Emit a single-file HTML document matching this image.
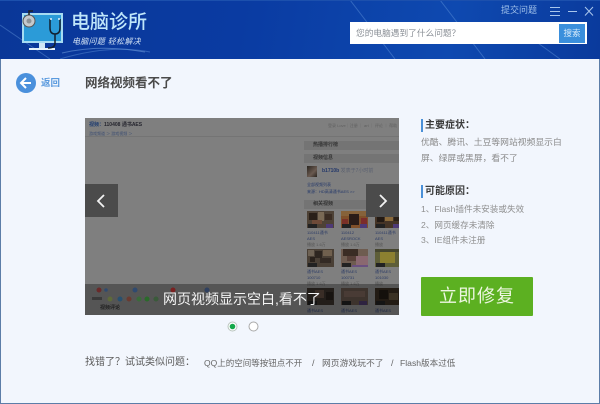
<!DOCTYPE html>
<html><head><meta charset="utf-8"><style>
html,body{margin:0;padding:0}
body{width:600px;height:404px;overflow:hidden;position:relative;background:#f2f6fd;font-family:"Liberation Sans","Noto Sans CJK SC",sans-serif}
.a{position:absolute;white-space:nowrap}
.t{position:absolute;overflow:hidden}
</style></head><body>
<div class="t" style="left:0;top:0;width:600px;height:59px;background:linear-gradient(100deg,#0a3798 0%,#0a3ba2 40%,#0e49b0 75%,#0a3a9c 100%)">
<svg width="600" height="59" style="position:absolute;left:0;top:0"><g stroke="#6fa0e0" stroke-width="1" opacity=".4" fill="none"><path d="M0 25L50 59M350 0L395 59M440 0L485 59M520 30L560 59M60 59Q110 44 150 52"/></g><path d="M0 .5H600" stroke="#1c50ad"/></svg>
</div>
<div class="a" style="left:0;top:59px;width:1px;height:345px;background:#5c7da8"></div>
<div class="a" style="left:599px;top:59px;width:1px;height:345px;background:#5c7da8"></div>
<div class="a" style="left:0;top:403px;width:600px;height:1px;background:#5c7da8"></div>

<!-- logo -->
<svg class="a" style="left:20px;top:10px" width="46" height="42" viewBox="0 0 46 42">
<rect x="2" y="3" width="41" height="30" fill="#a6dcf2"/><rect x="4" y="5" width="37" height="26" fill="#2b9bd8"/>
<rect x="19" y="33" width="6" height="5" fill="#cfe6f4"/><rect x="9" y="38" width="26" height="2" fill="#e6f2fa"/>
<circle cx="9" cy="11" r="6" fill="#c5c9cc" stroke="#555" stroke-width="1"/><circle cx="9" cy="11" r="2.5" fill="#8d9397"/><path d="M9 5V1H13" stroke="#222" stroke-width="1.5" fill="none"/>
<path d="M30 9V18Q30 24 35 24T40 18V9M35 24V33Q35 38 28 38" stroke="#12202e" stroke-width="1.5" fill="none"/>
<path d="M30 9H32M38 9H40" stroke="#dff2fb" stroke-width="1.4"/>
</svg>
<div class="a" style="left:71px;top:13px;font-size:19px;line-height:20px;font-weight:500;color:#bfe6fa">电脑诊所</div>
<div class="a" style="left:72px;top:37px;font-size:8px;line-height:10px;letter-spacing:.3px;font-style:italic;color:#d5e4f5">电脑问题 轻松解决</div>
<svg class="a" style="left:60px;top:44px" width="90" height="12"><path d="M2 9Q40 0 85 8" stroke="#6b98d8" fill="none" opacity=".6"/></svg>

<!-- top right -->
<div class="a" style="left:501px;top:4px;font-size:9px;line-height:13px;color:#9fc0ea">提交问题</div>
<svg class="a" style="left:548px;top:4px" width="46" height="14" fill="none" stroke="#a9c6ec" stroke-width="1">
<path d="M2 3.5H12M2 7.5H12M2 11.5H12M20 7.5H29M37 3L45 11.5M45 3L37 11.5"/></svg>
<div class="a" style="left:350px;top:22px;width:237px;height:22px;background:#fff"></div>
<div class="a" style="left:356px;top:26px;font-size:8.7px;line-height:14px;color:#8a8f96">您的电脑遇到了什么问题？</div>
<div class="a" style="left:559px;top:24px;width:26px;height:19px;background:#3a8fdc;color:#d9ecfb;font-size:8.5px;line-height:19px;text-align:center">搜索</div>

<!-- back -->
<div class="a" style="left:16px;top:73px;width:20px;height:20px;border-radius:50%;background:#4a90dc"></div>
<svg class="a" style="left:16px;top:73px" width="20" height="20" fill="none" stroke="#fff" stroke-width="2"><path d="M15 10H5M10 5L5 10L10 15"/></svg>
<div class="a" style="left:41px;top:77px;font-size:9.5px;line-height:13px;font-weight:700;color:#5a9ade">返回</div>
<div class="a" style="left:85px;top:75px;font-size:12.5px;line-height:16px;font-weight:700;color:#4a4a4a">网络视频看不了</div>

<!-- slide image -->
<div class="t" style="left:85px;top:118px;width:314px;height:197px;background:#7f7f7f">
<div class="a" style="left:4px;top:4px;font-size:5px;line-height:7px;font-weight:700;color:#25252e"><span style="color:#1e3c70">视频：</span>110408 通书AES</div>
<div class="a" style="left:4px;top:13px;font-size:4px;line-height:6px;color:#3b4d72">游戏频道 ＞ 游戏视频 ＞</div>
<div class="a" style="left:0;top:18px;width:314px;height:1px;background:#747474"></div>
<div class="a" style="left:243px;top:5px;font-size:4px;line-height:6px;color:#606060">登录 Love｜注册 ｜ art ｜ 评论 ｜ 帮助</div>
<div class="a" style="left:219px;top:23px;width:95px;height:9px;background:#747474;font-size:5px;line-height:9px;font-weight:700;color:#333"><span style="margin-left:9px">热播排行榜</span></div>
<div class="a" style="left:219px;top:36px;width:95px;height:9px;background:#747474;font-size:5px;line-height:9px;font-weight:700;color:#333"><span style="margin-left:9px">视频信息</span></div>
<div class="a" style="left:222px;top:48px;width:10px;height:11px;background:linear-gradient(135deg,#2a2520,#6a5a50 60%,#2a2520)"></div>
<div class="a" style="left:237px;top:50px;font-size:5px;line-height:7px;color:#5a6070"><b style="color:#24386a">b1710b</b> 发表于7小时前</div>
<div class="a" style="left:222px;top:64px;font-size:4px;line-height:6px;color:#24386a">全部视频列表</div>
<div class="a" style="left:222px;top:71px;font-size:4px;line-height:6px;color:#24386a">来源：HD高清通书AES &gt;&gt;</div>
<div class="a" style="left:219px;top:82px;width:95px;height:9px;background:#747474;font-size:5px;line-height:9px;font-weight:700;color:#333"><span style="margin-left:9px">相关视频</span></div>

<svg class="a" style="left:222px;top:93px" width="92" height="94" shape-rendering="crispEdges">
<g transform="translate(0,0)"><rect width="27" height="17" fill="#4e4236"/><rect x="2" y="2" width="8" height="7" fill="#2a2018"/><rect x="11" y="1" width="6" height="9" fill="#7a6a55"/><rect x="18" y="3" width="7" height="6" fill="#3a2c22"/><rect x="5" y="9" width="10" height="4" fill="#6e4a38"/><rect x="1" y="13" width="9" height="4" fill="#222"/><rect x="19" y="13" width="7" height="4" fill="#4e3a76"/></g>
<g transform="translate(34,0)"><rect width="27" height="17" fill="#80502a"/><rect width="27" height="5" fill="#86623a"/><rect x="8" y="3" width="10" height="11" fill="#2a1c18"/><rect x="1" y="8" width="6" height="5" fill="#7a3028"/><rect x="20" y="7" width="6" height="6" fill="#7c2c2c"/><rect x="1" y="13" width="9" height="4" fill="#222"/><rect x="19" y="13" width="7" height="4" fill="#4e3a76"/></g>
<g transform="translate(68,0)"><rect width="24" height="17" fill="#453426"/><rect x="2" y="1" width="7" height="10" fill="#231a14"/><rect x="10" y="3" width="8" height="7" fill="#8a6a3c"/><rect x="19" y="1" width="5" height="9" fill="#2a2018"/><rect x="1" y="13" width="9" height="4" fill="#222"/><rect x="18" y="13" width="6" height="4" fill="#4e3a76"/></g>
<g transform="translate(0,38)"><rect width="27" height="18" fill="#4a4036"/><rect x="1" y="1" width="6" height="6" fill="#6e6254"/><rect x="8" y="2" width="7" height="7" fill="#2e2620"/><rect x="16" y="1" width="9" height="6" fill="#70604e"/><rect x="3" y="8" width="5" height="5" fill="#2a221c"/><rect x="13" y="9" width="11" height="5" fill="#332a24"/><rect x="1" y="14" width="9" height="4" fill="#222"/></g>
<g transform="translate(34,38)"><rect width="27" height="18" fill="#6e5c50"/><rect x="2" y="0" width="15" height="7" fill="#3a2c24"/><rect x="15" y="7" width="12" height="9" fill="#8a6870"/><rect x="6" y="7" width="9" height="5" fill="#574038"/><rect x="1" y="14" width="9" height="4" fill="#222"/><rect y="16" x="11" width="16" height="2" fill="#6a5080"/></g>
<g transform="translate(68,38)"><rect width="24" height="18" fill="#5e5e38"/><rect x="5" y="3" width="15" height="11" fill="#8c8030"/><rect x="0" y="0" width="24" height="3" fill="#45452e"/><rect x="1" y="14" width="9" height="4" fill="#222"/></g>
<g transform="translate(0,77)"><rect width="27" height="17" fill="#352d28"/><rect x="8" y="2" width="9" height="8" fill="#56443a"/><rect x="19" y="4" width="7" height="8" fill="#231d18"/><rect x="1" y="13" width="9" height="4" fill="#1e1e1e"/></g>
<g transform="translate(34,77)"><rect width="27" height="17" fill="#5c4c44"/><rect x="3" y="3" width="21" height="6" fill="#6e5850"/><rect x="1" y="13" width="9" height="4" fill="#1e1e1e"/><rect x="18" y="13" width="8" height="4" fill="#453560"/></g>
<g transform="translate(68,77)"><rect width="24" height="17" fill="#33291e"/><rect x="4" y="2" width="9" height="9" fill="#1e1812"/><rect x="14" y="5" width="9" height="7" fill="#574a36"/><rect x="1" y="13" width="9" height="4" fill="#1e1e1e"/></g>
</svg>
<div class="a" style="left:222px;top:112px;font-size:4px;line-height:6px;color:#2b3b66">110411通书<br>AES<br><span style="color:#555">播放 1.6万</span></div>
<div class="a" style="left:256px;top:112px;font-size:4px;line-height:6px;color:#2b3b66">110412<br>AESROCK<br><span style="color:#555">播放 1.6万</span></div>
<div class="a" style="left:290px;top:112px;font-size:4px;line-height:6px;color:#2b3b66">110411通书<br>AES<br><span style="color:#555">播放</span></div>
<div class="a" style="left:222px;top:151px;font-size:4px;line-height:6px;color:#2b3b66">通书AES<br>100710<br><span style="color:#555">播放 1.6万</span></div>
<div class="a" style="left:256px;top:151px;font-size:4px;line-height:6px;color:#2b3b66">通书AES<br>100731<br><span style="color:#555">播放 1.6万</span></div>
<div class="a" style="left:290px;top:151px;font-size:4px;line-height:6px;color:#2b3b66">通书AES<br>101030<br><span style="color:#555">播放</span></div>
<div class="a" style="left:222px;top:190px;font-size:4px;line-height:6px;color:#2b3b66">通书AES</div>
<div class="a" style="left:256px;top:190px;font-size:4px;line-height:6px;color:#2b3b66">通书AES</div>
<div class="a" style="left:290px;top:190px;font-size:4px;line-height:6px;color:#2b3b66">通书AES</div>

<!-- caption bar -->
<div class="a" style="left:0;top:166px;width:314px;height:31px;background:rgba(0,0,0,.33)"></div>
<svg class="a" style="left:0;top:166px" width="150" height="20"><circle cx="14" cy="6" r="2.5" fill="#6a2a2a"/><circle cx="21" cy="6" r="1.8" fill="#2f4a70"/><circle cx="50" cy="6" r="2.5" fill="#2f4a70"/><circle cx="88" cy="6" r="2.5" fill="#7a2020"/><circle cx="122" cy="6" r="2.5" fill="#2f4060"/><rect x="7" y="13" width="10" height="3" fill="#3a3a3a"/><circle cx="25" cy="15" r="2.5" fill="#5e6a3a"/><circle cx="35" cy="15" r="2.5" fill="#28506e"/><circle cx="44" cy="15" r="2.5" fill="#6a3a30"/><circle cx="54" cy="15" r="2.5" fill="#3a6a3a"/><circle cx="62" cy="15" r="2.5" fill="#2a6a2a"/><circle cx="71" cy="15" r="2.5" fill="#3a5a3a"/></svg>
<div class="a" style="left:15px;top:187px;font-size:5px;line-height:7px;font-weight:700;color:#222">视频评论</div>
<div class="a" style="left:78px;top:171px;font-size:14px;line-height:20px;color:#f4f4f4">网页视频显示空白,看不了</div>

<!-- arrows -->
<div class="a" style="left:0;top:66px;width:33px;height:33px;background:#4b4b4b"></div>
<div class="a" style="left:281px;top:66px;width:33px;height:33px;background:#4b4b4b"></div>
<svg class="a" style="left:0;top:66px" width="33" height="33" fill="none" stroke="#f2f2f2" stroke-width="1.8"><path d="M19 11L13 17L19 23"/></svg>
<svg class="a" style="left:281px;top:66px" width="33" height="33" fill="none" stroke="#f2f2f2" stroke-width="1.8"><path d="M14 11L20 17L14 23"/></svg>
</div>

<!-- dots -->
<svg class="a" style="left:226px;top:320px" width="34" height="13">
<circle cx="6.5" cy="6.5" r="4.5" fill="#fff" stroke="#b9c4bd"/><circle cx="6.5" cy="6.5" r="2.8" fill="#13a84a"/>
<circle cx="27.5" cy="6.5" r="4.5" fill="#fff" stroke="#a9a9a9"/>
</svg>

<!-- right column -->
<div class="a" style="left:421px;top:119px;width:2px;height:13px;background:#4a90d8"></div>
<div class="a" style="left:425px;top:118px;font-size:10px;line-height:15px;font-weight:700;color:#3a3a3a">主要症状：</div>
<div class="a" style="left:421px;top:135px;font-size:8.8px;line-height:15.5px;color:#8a8a8a">优酷、腾讯、土豆等网站视频显示白<br>屏、绿屏或黑屏，看不了</div>
<div class="a" style="left:421px;top:185px;width:2px;height:13px;background:#4a90d8"></div>
<div class="a" style="left:425px;top:184px;font-size:10px;line-height:15px;font-weight:700;color:#3a3a3a">可能原因：</div>
<div class="a" style="left:421px;top:202px;font-size:8.6px;line-height:15.5px;color:#8f8f8f">1、Flash插件未安装或失效<br>2、网页缓存未清除<br>3、IE组件未注册</div>
<div class="a" style="left:421px;top:277px;width:112px;height:39px;background:#5cb021;border-radius:1px;color:#eef7e2;font-size:18px;line-height:39px;text-align:center;letter-spacing:1px">立即修复</div>

<!-- footer -->
<div class="a" style="left:85px;top:356px;font-size:10px;line-height:14px;color:#5a5a5a">找错了？试试类似问题：</div>
<div class="a" style="left:204px;top:356px;font-size:8.5px;line-height:14px;color:#666">QQ上的空间等按钮点不开</div>
<div class="a" style="left:312px;top:356px;font-size:9px;line-height:14px;color:#666">/</div>
<div class="a" style="left:322px;top:356px;font-size:8.8px;line-height:14px;color:#666">网页游戏玩不了</div>
<div class="a" style="left:391px;top:356px;font-size:9px;line-height:14px;color:#666">/</div>
<div class="a" style="left:400px;top:356px;font-size:8.6px;line-height:14px;color:#666">Flash版本过低</div>
</body></html>
